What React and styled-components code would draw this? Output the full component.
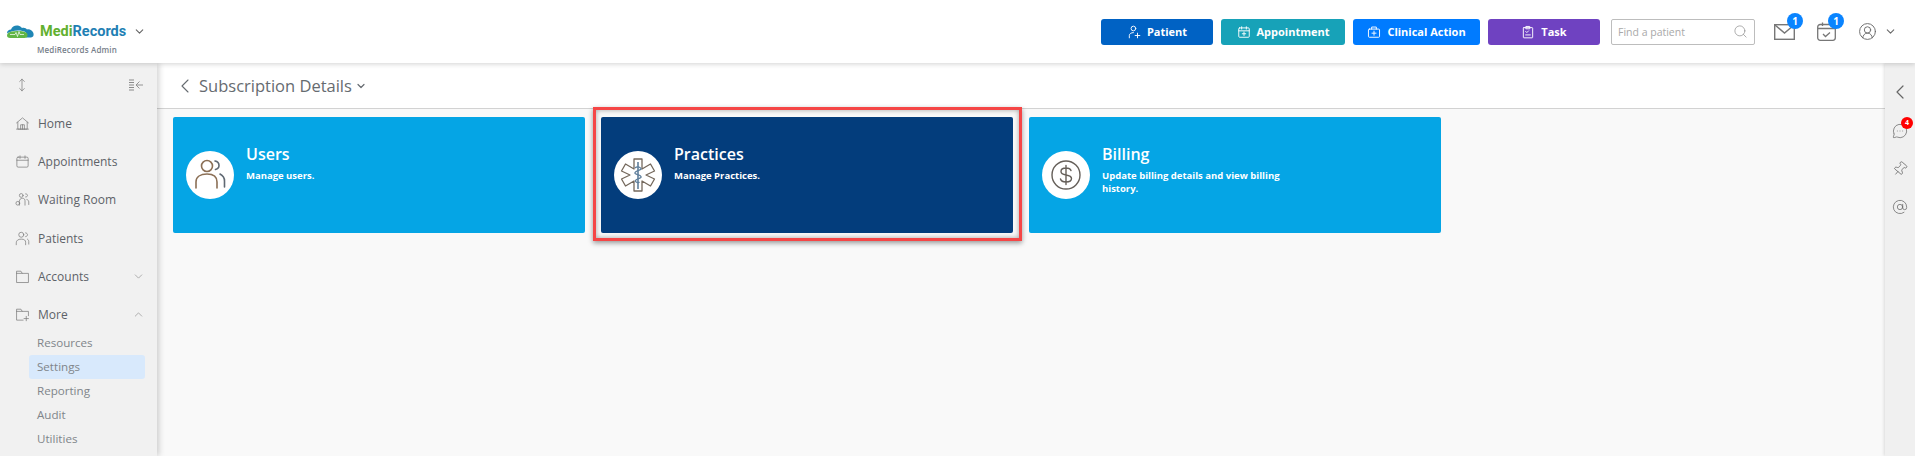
import styled, { createGlobalStyle } from "styled-components";
import {
    ChevronDown,
    ChevronUp,
    ChevronLeft,
    Search,
    MoveVertical,
    Pin,
    AtSign,
    MessageCircleMore,
    CircleUserRound,
} from "lucide-react";

const GlobalStyle = createGlobalStyle`
    html, body {
        margin: 0;
        padding: 0;
        height: 100%;
        overflow: hidden;
        background: #fff;
        font-family: "Open Sans", "Liberation Sans", sans-serif;
    }
    * {
        box-sizing: border-box;
    }
`;

const Svg = ({ size = 15, children, width = 1.2 }) => (
    <svg
        width={size}
        height={size}
        viewBox="0 0 24 24"
        fill="none"
        stroke="currentColor"
        strokeWidth={width}
        strokeLinecap="round"
        strokeLinejoin="round"
    >
        {children}
    </svg>
);

// Logo cloud with the pulse line
const LogoCloud = () => (
    <svg width="29" height="16" viewBox="0 0 29 15">
        <path
            d="M1 9c0-3 2-4 4-4 1-3 4-4.500 7-4 2 .3 3 1.500 4 2.500 2-.8 4 0 5 1.500 1-.5 3-.2 4.500 1 1.500 1 2.500 3 2 5-.3 1.500-2 2-3.500 2H20V8c-2-1.500-5-2-8-2-4 0-8 1-11 3z"
            fill="#1f86b5"
        />
        <path
            d="M1 11c0-2 2-3.500 5-4 4-.8 10-.8 14 1 1 .5 1.500 1.500 1.500 2.500 0 2-1 3-3 3H4c-2 0-3-1-3-2.500z"
            fill="#62b545"
        />
        <path
            d="M4 10h5l1-2 1.500 4 1.500-5 1 3h4"
            fill="none"
            stroke="#fff"
            strokeWidth=".7"
        />
    </svg>
);

const HomeIcon = () => (
    <Svg>
        <path d="M2.500 11 12 3l9.500 8M4.500 10v11h15V10M2.500 21h19" />
        <path d="M9 21v-7h6v7M12 14v7" />
    </Svg>
);
const CalendarIcon = () => (
    <Svg>
        <rect x="3" y="5" width="18" height="16" rx="2" />
        <path d="M3 10h18M8 3v4M16 3v4" />
    </Svg>
);
const WaitingIcon = () => (
    <Svg>
        <circle cx="10" cy="5.500" r="3" />
        <path d="M17 3c2 0 3 1 3 2.500S19 8 17 8M7 21v-6c0-3 2-5 5-5s4 2 4 4v7M19 12c2 .5 3 2 3 4v4" />
        <circle cx="4.500" cy="18" r="3" />
    </Svg>
);
const PatientsIcon = () => (
    <Svg>
        <circle cx="10" cy="6" r="4" />
        <path d="M2 22v-3c0-4 3-6 8-6s7 2 7 5v4M17 3c2 .3 3 1.500 3 3s-1 2.700-3 3M20 13c1.500 1 2 2.500 2 4v4" />
    </Svg>
);
const FolderIcon = () => (
    <Svg>
        <path d="M2.500 21V3.500h7l2 3.500h10v14z" />
        <path d="M2.500 7h9" />
    </Svg>
);
const FolderPlusIcon = () => (
    <Svg>
        <path d="M13 21H2.500V3.500h7l2 3.500h10v7" />
        <path d="M2.500 7h9M18 15v7M14.500 18.500h7" />
    </Svg>
);
const CollapseIcon = () => (
    <svg width="15" height="12" viewBox="0 0 15 12" fill="none" stroke="#8a8a8a">
        <path d="M0 1h5M0 3.500h5M0 6h5M0 8.500h5M0 11h5" strokeWidth="1.200" />
        <path d="M14 6H7.500M10.500 2.500 7 6l3.500 3.500" strokeWidth=".9" />
    </svg>
);

const UsersArt = () => (
    <svg width="34" height="34" viewBox="0 0 34 34" fill="none" strokeWidth="1.600" strokeLinecap="round">
        <circle cx="14" cy="8" r="5.500" stroke="#8b6f55" />
        <path d="M22 3c3 .5 4 2.500 4 4.500s-1.500 3.500-3.500 4" stroke="#5f6872" />
        <path d="M3 30v-6c0-5 4.500-8 11-8s10 3 10 8v6" stroke="#8b6f55" />
        <path d="M27 16c3 1.500 4.500 4 4.500 7v6" stroke="#5f6872" />
    </svg>
);
const StarOfLifeArt = () => (
    <svg width="36" height="36" viewBox="0 0 36 36" fill="none" stroke="#74685c" strokeWidth="1.300" strokeLinejoin="round">
        <path d="M14 2h8v10l8.500-5 4 7-8.500 4 8.500 4-4 7-8.500-5v10h-8V24l-8.500 5-4-7 8.500-4-8.500-4 4-7 8.500 5z" />
        <path d="M18 5v27" stroke="#5f7f9c" strokeWidth="1.600" />
        <path d="M15 11c2-2 5-1 6 .5s-5 2-6 4 5 2 6 4-5 2-5.500 4 3 2.500 4 1.500" stroke="#5f7f9c" />
    </svg>
);
const DollarArt = () => (
    <svg width="32" height="32" viewBox="0 0 32 32" fill="none" stroke="#655f59" strokeWidth="1.400" strokeLinecap="round">
        <circle cx="16" cy="16" r="14" />
        <path d="M21 11.500c-.5-1.500-2.500-2.500-5-2.500-3 0-5 1.300-5 3.500s2 3 5 3.500 5.500 1.300 5.500 3.500-2.500 3.500-5.500 3.500-5-1.200-5.500-3M16 6.500v19" />
    </svg>
);

const Page = styled.div`
    display: flex;
    flex-direction: column;
    height: 456px;
    width: 1915px;
    overflow: hidden;
`;

const Header = styled.header`
    position: relative;
    z-index: 3;
    flex: 0 0 63px;
    display: flex;
    align-items: center;
    padding: 0 18px 0 6px;
    background: #fff;
    box-shadow: 0 1px 5px rgba(0, 0, 0, 0.18);
`;

const Brand = styled.div`
    display: flex;
    flex-direction: column;
    align-items: flex-start;
    width: 140px;
    margin-top: 15px;
`;

const BrandRow = styled.div`
    display: flex;
    align-items: center;
    gap: 5px;
    color: #666;
`;

const BrandName = styled.span`
    font-family: "Roboto", sans-serif;
    font-size: 14.5px;
    font-weight: 700;
    color: #62b02f;
    margin-right: 2px;

    b {
        font-weight: 700;
        color: #1f7fb4;
    }
`;

const BrandSub = styled.div`
    font-size: 8px;
    font-weight: 600;
    color: #77808a;
    margin: 4px 0 0 31px;
    letter-spacing: 0.15px;
`;

const Actions = styled.div`
    margin-left: auto;
    display: flex;
    align-items: center;
    gap: 8px;
`;

const ActionButton = styled.button`
    display: flex;
    align-items: center;
    justify-content: center;
    gap: 6px;
    width: ${(p) => p.$w}px;
    height: 26px;
    padding: 0;
    border: 0;
    border-radius: 3px;
    background: ${(p) => p.$bg};
    color: #fff;
    font-family: inherit;
    font-size: 11px;
    font-weight: 700;
`;

const SearchBox = styled.div`
    display: flex;
    align-items: center;
    justify-content: space-between;
    width: 144px;
    height: 26px;
    margin-left: 3px;
    padding: 0 6px;
    border: 1px solid #bdbdbd;
    border-radius: 2px;
    color: #8a8a8a;
    font-size: 10.5px;

    span {
        color: #a9a9a9;
    }
`;

const HeaderIcon = styled.div`
    position: relative;
    display: flex;
    color: #777;
`;

const CountBadge = styled.span`
    position: absolute;
    top: ${(p) => p.$top ?? -9}px;
    right: ${(p) => p.$right ?? -8}px;
    display: flex;
    align-items: center;
    justify-content: center;
    width: ${(p) => p.$size ?? 16}px;
    height: ${(p) => p.$size ?? 16}px;
    border-radius: 50%;
    background: ${(p) => p.$bg ?? "#0a84ff"};
    color: #fff;
    font-size: ${(p) => p.$font ?? 10}px;
    font-weight: 700;
`;

const HeaderIcons = styled.div`
    display: flex;
    align-items: center;
    margin-left: 19px;
    gap: 22px;
`;

const UserMenu = styled.div`
    display: flex;
    align-items: center;
    gap: 7px;
    color: #6a6a6a;
`;

const Body = styled.div`
    flex: 1;
    display: flex;
    min-height: 0;
`;

const Sidebar = styled.aside`
    position: relative;
    z-index: 2;
    flex: 0 0 157px;
    padding: 12px 12px 0 15px;
    background: #f1f1f1;
    box-shadow: 2px 0 6px rgba(0, 0, 0, 0.18);
`;

const SideTop = styled.div`
    display: flex;
    align-items: center;
    justify-content: space-between;
    height: 20px;
    color: #777;
    margin-bottom: 18px;
    padding-right: 1px;
`;

const NavItem = styled.div`
    display: flex;
    align-items: center;
    height: 20px;
    margin-bottom: 18.4px;
    gap: 8px;
    color: #5d6268;
    font-size: 12px;

    svg:first-child {
        color: #7d7d7d;
        flex: none;
    }
`;

const NavLabel = styled.span`
    flex: 1;
`;

const SubNav = styled.div`
    display: flex;
    flex-direction: column;
    margin: -12px 0 0 14px;
`;

const SubItem = styled.div`
    height: 24px;
    line-height: 24px;
    padding-left: 8px;
    border-radius: 3px;
    font-size: 11.6px;
    color: #80858a;
    background: ${(p) => (p.$active ? "#d8e9fc" : "transparent")};
`;

const Main = styled.main`
    flex: 1;
    min-width: 0;
    background: #f9f9f9;
`;

const TitleBar = styled.div`
    display: flex;
    align-items: center;
    height: 46px;
    padding-left: 16px;
    gap: 2px;
    background: #fff;
    border-bottom: 1px solid #d2d2d2;
    color: #666b70;
`;

const Title = styled.h1`
    margin: 0;
    font-size: 16.5px;
    font-weight: 500;
    color: #666b70;
`;

const TitleGroup = styled.div`
    display: flex;
    align-items: center;
    gap: 3px;
`;

const Cards = styled.div`
    display: flex;
    gap: 16px;
    padding: 8px 0 0 16px;
`;

const Card = styled.div`
    position: relative;
    display: flex;
    width: 412px;
    height: 116px;
    padding: 34px 13px 0;
    gap: 12px;
    border-radius: 2px;
    color: #fff;
    background: ${(p) => (p.$selected ? "#033d7c" : "#05a5e5")};

    ${(p) =>
        p.$selected &&
        `
        &::after {
            content: "";
            position: absolute;
            inset: -10px -9px -8px -8px;
            border: 3px solid #f54646;
            box-shadow: 0 2px 5px rgba(0, 0, 0, 0.4), inset 0 0 5px rgba(0, 0, 0, 0.35);
        }
    `}
`;

const CardCircle = styled.div`
    flex: none;
    display: flex;
    align-items: center;
    justify-content: center;
    width: 48px;
    height: 48px;
    border-radius: 50%;
    background: #fff;
`;

const CardText = styled.div`
    width: 180px;
    margin-top: -8px;
`;

const CardTitle = styled.h2`
    margin: 0 0 4px;
    font-size: 16px;
    line-height: 22px;
    font-weight: 600;
`;

const CardDesc = styled.p`
    margin: 0;
    font-size: 9.5px;
    line-height: 13px;
    font-weight: 700;
`;

const Rail = styled.aside`
    position: relative;
    z-index: 1;
    flex: 0 0 30px;
    display: flex;
    flex-direction: column;
    align-items: center;
    padding-top: 10px;
    background: #f0f0f0;
    color: #666;
    box-shadow: -1px 0 3px rgba(0, 0, 0, 0.12);
`;

const RailSlot = styled.div`
    display: flex;
    align-items: center;
    justify-content: center;
    height: 38.4px;
`;

const RailIcon = styled.div`
    position: relative;
    display: flex;
`;

const menu = [
    { label: "Home", icon: <HomeIcon /> },
    { label: "Appointments", icon: <CalendarIcon /> },
    { label: "Waiting Room", icon: <WaitingIcon /> },
    { label: "Patients", icon: <PatientsIcon /> },
    { label: "Accounts", icon: <FolderIcon />, chevron: <ChevronDown size={13} strokeWidth={1.2} color="#8a8a8a" /> },
    { label: "More", icon: <FolderPlusIcon />, chevron: <ChevronUp size={13} strokeWidth={1.2} color="#8a8a8a" /> },
];

const subMenu = ["Resources", "Settings", "Reporting", "Audit", "Utilities"];

const cards = [
    { title: "Users", desc: "Manage users.", art: <UsersArt /> },
    { title: "Practices", desc: "Manage Practices.", art: <StarOfLifeArt />, selected: true },
    { title: "Billing", desc: "Update billing details and view billing history.", art: <DollarArt /> },
];

const App = () => {
    return (
        <Page>
            <GlobalStyle />
            <Header>
                <Brand>
                    <BrandRow>
                        <LogoCloud />
                        <BrandName>
                            Medi<b>Records</b>
                        </BrandName>
                        <ChevronDown size={13} strokeWidth={2} />
                    </BrandRow>
                    <BrandSub>MediRecords Admin</BrandSub>
                </Brand>
                <Actions>
                    <ActionButton $w={112} $bg="#0062c4">
                        <Svg size={14} width={1.6}>
                            <circle cx="11" cy="6" r="4" />
                            <path d="M4 22v-4c0-3 3-5 7-5M18 14v8M14 18h8" />
                        </Svg>
                        Patient
                    </ActionButton>
                    <ActionButton $w={124} $bg="#17a2b8">
                        <Svg size={14} width={1.6}>
                            <rect x="3" y="5" width="18" height="16" rx="1.500" />
                            <path d="M3 10h18M8 3v4M16 3v4M12 12v6M9 15h6" />
                        </Svg>
                        Appointment
                    </ActionButton>
                    <ActionButton $w={127} $bg="#007bff">
                        <Svg size={14} width={1.6}>
                            <rect x="2.500" y="7" width="19" height="14" rx="1.500" />
                            <path d="M8 7V3.500h8V7M12 10.500v7M8.500 14h7" />
                        </Svg>
                        Clinical Action
                    </ActionButton>
                    <ActionButton $w={112} $bg="#6f42c1">
                        <Svg size={14} width={1.6}>
                            <rect x="4" y="4.500" width="16" height="17.500" rx="1" />
                            <path d="M9 2.500h6v4H9zM8 11l2 2 3-3M8 17h8" />
                        </Svg>
                        Task
                    </ActionButton>
                    <SearchBox>
                        <span>Find a patient</span>
                        <Search size={15} strokeWidth={1.1} />
                    </SearchBox>
                </Actions>
                <HeaderIcons>
                    <HeaderIcon>
                        <svg width="21" height="16" viewBox="0 0 21 16" fill="none" stroke="#777" strokeWidth="1.400">
                            <rect x=".7" y=".7" width="19.600" height="14.600" />
                            <path d="m1 1 9.500 8L20 1" />
                        </svg>
                        <CountBadge $top={-11}>1</CountBadge>
                    </HeaderIcon>
                    <HeaderIcon>
                        <svg width="19" height="19" viewBox="0 0 19 19" fill="none" stroke="#777" strokeWidth="1.300">
                            <rect x=".7" y="2.500" width="17.600" height="15.800" rx="2.500" />
                            <path d="M1 6.500h17M5.500 .5v3.500M13.500 .5V4M6 12l2.500 2.500 4.500-4" />
                        </svg>
                        <CountBadge>1</CountBadge>
                    </HeaderIcon>
                    <UserMenu>
                        <CircleUserRound size={19} strokeWidth={1.2} />
                        <ChevronDown size={13} strokeWidth={2} />
                    </UserMenu>
                </HeaderIcons>
            </Header>
            <Body>
                <Sidebar>
                    <SideTop>
                        <MoveVertical size={14} strokeWidth={1.2} />
                        <CollapseIcon />
                    </SideTop>
                    {menu.map((item) => (
                        <NavItem key={item.label}>
                            {item.icon}
                            <NavLabel>{item.label}</NavLabel>
                            {item.chevron}
                        </NavItem>
                    ))}
                    <SubNav>
                        {subMenu.map((name) => (
                            <SubItem key={name} $active={name === "Settings"}>
                                {name}
                            </SubItem>
                        ))}
                    </SubNav>
                </Sidebar>
                <Main>
                    <TitleBar>
                        <ChevronLeft size={24} strokeWidth={1.1} />
                        <TitleGroup>
                            <Title>Subscription Details</Title>
                            <ChevronDown size={12} strokeWidth={2.4} />
                        </TitleGroup>
                    </TitleBar>
                    <Cards>
                        {cards.map((card) => (
                            <Card key={card.title} $selected={card.selected}>
                                <CardCircle>{card.art}</CardCircle>
                                <CardText>
                                    <CardTitle>{card.title}</CardTitle>
                                    <CardDesc>{card.desc}</CardDesc>
                                </CardText>
                            </Card>
                        ))}
                    </Cards>
                </Main>
                <Rail>
                    <RailSlot>
                        <ChevronLeft size={24} strokeWidth={1.2} />
                    </RailSlot>
                    <RailSlot>
                        <RailIcon>
                            <MessageCircleMore size={16} strokeWidth={1.1} />
                            <CountBadge $size={12} $font={7} $bg="#f00" $top={-6} $right={-5}>
                                4
                            </CountBadge>
                        </RailIcon>
                    </RailSlot>
                    <RailSlot>
                        <Pin size={16} strokeWidth={1.1} style={{ transform: "rotate(40deg)" }} />
                    </RailSlot>
                    <RailSlot>
                        <AtSign size={16} strokeWidth={1.1} />
                    </RailSlot>
                </Rail>
            </Body>
        </Page>
    );
};

export default App;
